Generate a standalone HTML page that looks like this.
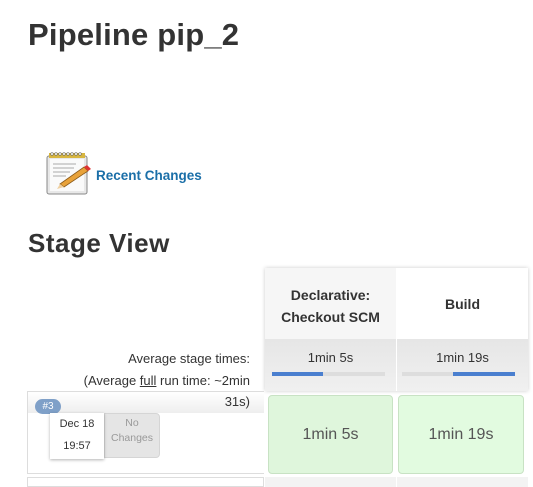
<!DOCTYPE html>
<html><head><meta charset="utf-8"><style>
body{margin:0;width:533px;height:483px;overflow:hidden;background:#fff;font-family:"Liberation Sans",sans-serif;color:#333;position:relative}
.a{position:absolute}
h1{position:absolute;left:28px;top:17px;margin:0;font-size:31px;font-weight:bold;color:#333;letter-spacing:0.2px}
h2{position:absolute;left:28px;top:228px;margin:0;font-size:26px;font-weight:bold;color:#333;letter-spacing:0.5px}
.bar{position:absolute;height:4px;background:#ddd}
.fill{position:absolute;top:0;height:4px;background:#4a7fcf}
.cell{position:absolute;top:395px;height:79px;background:#dff6dc;border:1px solid #c8e2c4;border-radius:4px;box-sizing:border-box;text-align:center;line-height:77px;font-size:16px;color:#555}
</style></head><body>
<h1>Pipeline pip_2</h1>
<svg class="a" style="left:44px;top:150px" width="50" height="46" viewBox="0 0 50 46">
<rect x="3" y="6" width="40" height="38" rx="2" fill="#e8e8e8" stroke="#888"/>
<rect x="6" y="9" width="34" height="32" fill="#fafafa"/>
<rect x="5" y="3" width="36" height="5" fill="#d8b640"/>
<g fill="#fff" stroke="#666" stroke-width="0.6"><circle cx="8" cy="4" r="1.3"/><circle cx="12" cy="4" r="1.3"/><circle cx="16" cy="4" r="1.3"/><circle cx="20" cy="4" r="1.3"/><circle cx="24" cy="4" r="1.3"/><circle cx="28" cy="4" r="1.3"/><circle cx="32" cy="4" r="1.3"/><circle cx="36" cy="4" r="1.3"/></g>
<g stroke="#aaa"><line x1="9" y1="14" x2="32" y2="14"/><line x1="9" y1="18" x2="30" y2="18"/><line x1="9" y1="22" x2="26" y2="22"/><line x1="9" y1="26" x2="22" y2="26"/></g>
<path d="M16 34 L40 17 L44 21 L20 37 Z" fill="#e8a23a" stroke="#8a5a1a" stroke-width="0.8"/>
<path d="M40 17 L43 15 L47 19 L44 21 Z" fill="#d33"/>
<path d="M16 34 L20 37 L13 39 Z" fill="#f0d0a0"/>
</svg>
<div class="a" style="left:96px;top:168px;font-size:13.5px;font-weight:bold;color:#1b6fa8">Recent Changes</div>
<h2>Stage View</h2>
<div class="a" style="left:265px;top:268px;width:263px;height:123px;box-shadow:0 0 4px rgba(0,0,0,.2)"></div>
<div class="a" style="left:265px;top:268px;width:131px;height:71px;background:#f6f6f6;text-align:center;font-size:14px;font-weight:bold;line-height:22px;padding-top:16px;box-sizing:border-box">Declarative:<br>Checkout SCM</div>
<div class="a" style="left:397px;top:268px;width:131px;height:71px;background:#fff;text-align:center;font-size:14px;font-weight:bold;line-height:72px">Build</div>
<div class="a" style="left:265px;top:339px;width:131px;height:52px;background:linear-gradient(#e6e6e6,#f0f0f0);text-align:center;font-size:13px;padding-top:11px;box-sizing:border-box">1min 5s</div>
<div class="a" style="left:397px;top:339px;width:131px;height:52px;background:linear-gradient(#e6e6e6,#f0f0f0);text-align:center;font-size:13px;padding-top:11px;box-sizing:border-box">1min 19s</div>
<div class="bar" style="left:272px;top:372px;width:113px"><div class="fill" style="left:0;width:51px"></div></div>
<div class="bar" style="left:402px;top:372px;width:113px"><div class="fill" style="left:51px;width:62px"></div></div>
<div class="a" style="left:27px;top:391px;width:237px;height:83px;border:1px solid #ddd;border-right:none;box-sizing:border-box"></div>
<div class="a" style="left:28px;top:392px;width:236px;height:21px;background:linear-gradient(#fff,#eee)"></div>
<div class="a" style="left:28px;top:348px;width:222px;text-align:right;font-size:13px;line-height:21.5px;color:#333">Average stage times:<br>(Average <u>full</u> run time: ~2min<br>31s)</div>
<div class="a" style="left:35px;top:399px;width:26px;height:15px;border-radius:8px;background:#7fa0c8;color:#fff;font-size:10px;text-align:center;line-height:15px">#3</div>
<div class="a" style="left:104px;top:413px;width:56px;height:45px;background:#e5e5e5;border-radius:0 4px 4px 0;border:1px solid #d5d5d5;box-sizing:border-box;color:#999;font-size:10.5px;text-align:center;line-height:15px;padding-top:2px">No<br>Changes</div>
<div class="a" style="left:50px;top:413px;width:54px;height:46px;background:#fff;box-shadow:0 1px 3px rgba(0,0,0,.3);font-size:11px;text-align:center;line-height:22px;color:#333">Dec 18<br>19:57</div>
<div class="cell" style="left:268px;width:125px">1min 5s</div>
<div class="cell" style="left:398px;width:126px;background:#e2fbe0">1min 19s</div>
<div class="a" style="left:27px;top:477px;width:237px;height:10px;border:1px solid #ddd;box-sizing:border-box"></div>
<div class="a" style="left:265px;top:477px;width:131px;height:10px;background:#f3f3f3"></div>
<div class="a" style="left:397px;top:477px;width:131px;height:10px;background:#f3f3f3"></div>
</body></html>
